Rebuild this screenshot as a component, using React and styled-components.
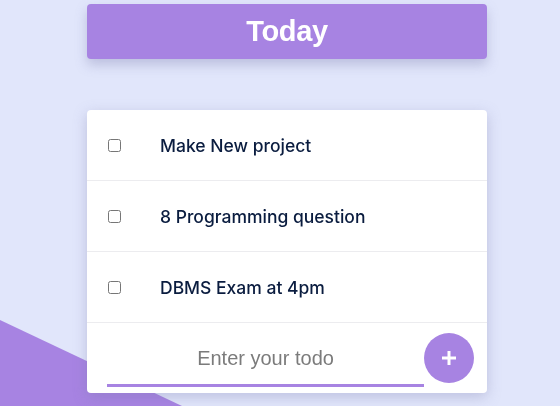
import React from "react";
import styled, { createGlobalStyle } from "styled-components";

const Global = createGlobalStyle`
  html, body { margin: 0; padding: 0; }
  body {
    background: #e1e6fb;
    font-family: "Liberation Sans", Arial, sans-serif;
    min-height: 406px;
    overflow: hidden;
  }
`;

const Decoration = styled.div`
  position: fixed;
  left: 0;
  top: 0;
  width: 560px;
  height: 406px;
  background: #a783e2;
  clip-path: polygon(0 320px, 182px 406px, 0 406px);
  z-index: 0;
`;

const Page = styled.main`
  position: relative;
  z-index: 1;
  display: flex;
  flex-direction: column;
  align-items: center;
  padding-top: 4px;
  padding-left: 14px;
  gap: 51px;
`;

const Header = styled.h1`
  margin: 0;
  width: 400px;
  height: 55px;
  display: flex;
  align-items: center;
  justify-content: center;
  background: #a783e2;
  border-radius: 4px;
  box-shadow: 0 6px 12px rgba(120, 120, 170, 0.35);
  color: #ffffff;
  font-family: "Liberation Sans", Arial, sans-serif;
  font-weight: 700;
  font-size: 29px;
  letter-spacing: -0.3px;
  padding-bottom: 1px;
  box-sizing: border-box;
`;

const Card = styled.section`
  width: 400px;
  background: #ffffff;
  border-radius: 4px;
  box-shadow: 0 4px 14px rgba(120, 120, 170, 0.35);
  overflow: hidden;
`;

const Row = styled.label`
  display: flex;
  align-items: center;
  height: 70px;
  border-bottom: 1px solid #ececef;
  padding-left: 20px;
`;

const Check = styled.input`
  width: 13px;
  height: 13px;
  margin: 0 39px 0 1px;
`;

const ItemText = styled.span`
  color: #0a1c3f;
  font-size: 17.5px;
  font-weight: 500;
  font-family: Inter, "Liberation Sans", Arial, sans-serif;
`;

const InputRow = styled.form`
  display: flex;
  align-items: flex-start;
  height: 70px;
  padding: 9px 13px 0 20px;
  box-sizing: border-box;
`;

const TodoInput = styled.input`
  width: 317px;
  height: 55px;
  box-sizing: border-box;
  border: none;
  border-bottom: 3px solid #a783e2;
  outline: none;
  text-align: center;
  font-family: "Liberation Sans", Arial, sans-serif;
  font-size: 20px;
  padding: 0;
  color: #333;
  &::placeholder { color: #7b7b7b; }
`;

const AddButton = styled.button`
  width: 50px;
  height: 50px;
  border-radius: 50%;
  border: none;
  background: #a783e2;
  display: flex;
  align-items: center;
  justify-content: center;
  padding: 0;
  margin-top: 1px;
`;

const items = ["Make New project", "8 Programming question", "DBMS Exam at 4pm"];

export default function App() {
  return (
    <>
      <Global />
      <Decoration />
      <Page>
        <Header>Today</Header>
        <Card>
          {items.map((t) => (
            <Row key={t}>
              <Check type="checkbox" />
              <ItemText>{t}</ItemText>
            </Row>
          ))}
          <InputRow onSubmit={(e) => e.preventDefault()}>
            <TodoInput placeholder="Enter your todo" />
            <AddButton type="submit" aria-label="add">
              <svg width="16" height="16" viewBox="0 0 16 16">
                <path d="M8 1v14M1 8h14" stroke="#fff" strokeWidth="3" />
              </svg>
            </AddButton>
          </InputRow>
        </Card>
      </Page>
    </>
  );
}
